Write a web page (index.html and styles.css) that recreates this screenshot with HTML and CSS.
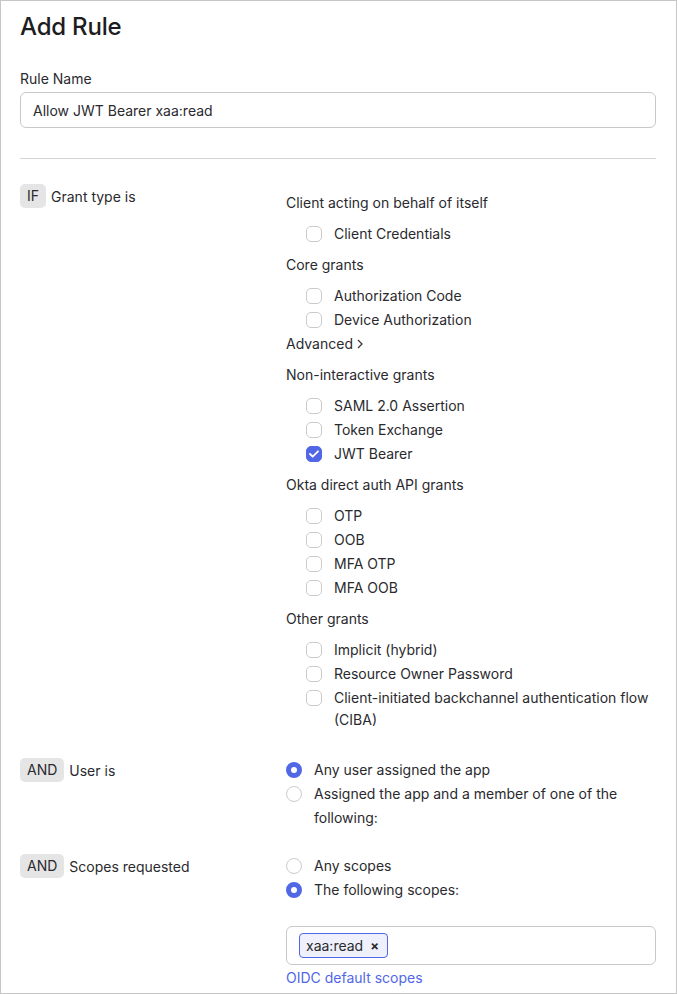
FILE: index.html
```html
<!DOCTYPE html>
<html lang="en">
<head>
    <meta charset="UTF-8">
    <meta name="viewport" content="width=device-width, initial-scale=1.0">
    <title>Add Rule</title>
    <link rel="stylesheet" href="styles.css">
</head>
<body>
    <div class="panel">
        <h1 class="title">Add Rule</h1>

        <label class="field-label" for="rule_name">Rule Name</label>
        <input type="text" id="rule_name" class="text-input" value="Allow JWT Bearer xaa:read">

        <hr class="divider">

        <!-- IF grant type -->
        <div class="condition first">
            <div class="cond-label"><span class="badge">IF</span>Grant type is</div>
            <div class="cond-body grants">
                <div class="group">
                    <div class="group-title">Client acting on behalf of itself</div>
                    <label class="check"><span class="box"></span>Client Credentials</label>
                </div>
                <div class="group">
                    <div class="group-title">Core grants</div>
                    <label class="check"><span class="box"></span>Authorization Code</label>
                    <label class="check"><span class="box"></span>Device Authorization</label>
                    <div class="advanced">Advanced
                        <svg width="8" height="10" viewBox="0 0 8 10"><path d="M2 1l4 4-4 4" fill="none" stroke="#3a3a3e" stroke-width="1.3"/></svg>
                    </div>
                </div>
                <div class="group">
                    <div class="group-title">Non-interactive grants</div>
                    <label class="check"><span class="box"></span>SAML 2.0 Assertion</label>
                    <label class="check"><span class="box"></span>Token Exchange</label>
                    <label class="check"><span class="box checked"><svg width="10" height="8" viewBox="0 0 10 8"><path d="M1 4l2.7 2.7L9 1.3" fill="none" stroke="#fff" stroke-width="1.8" stroke-linecap="round" stroke-linejoin="round"/></svg></span>JWT Bearer</label>
                </div>
                <div class="group">
                    <div class="group-title">Okta direct auth API grants</div>
                    <label class="check"><span class="box"></span>OTP</label>
                    <label class="check"><span class="box"></span>OOB</label>
                    <label class="check"><span class="box"></span>MFA OTP</label>
                    <label class="check"><span class="box"></span>MFA OOB</label>
                </div>
                <div class="group">
                    <div class="group-title">Other grants</div>
                    <label class="check"><span class="box"></span>Implicit (hybrid)</label>
                    <label class="check"><span class="box"></span>Resource Owner Password</label>
                    <label class="check"><span class="box"></span>Client-initiated backchannel authentication flow (CIBA)</label>
                </div>
            </div>
        </div>

        <!-- AND user -->
        <div class="condition">
            <div class="cond-label"><span class="badge">AND</span>User is</div>
            <div class="cond-body">
                <label class="radio"><span class="dot on"></span>Any user assigned the app</label>
                <label class="radio"><span class="dot"></span>Assigned the app and a member of one of the following:</label>
            </div>
        </div>

        <!-- AND scopes -->
        <div class="condition">
            <div class="cond-label"><span class="badge">AND</span>Scopes requested</div>
            <div class="cond-body">
                <label class="radio"><span class="dot"></span>Any scopes</label>
                <label class="radio"><span class="dot on"></span>The following scopes:</label>
                <div class="tag-input">
                    <span class="tag">xaa:read <span class="tag-x">&times;</span></span>
                </div>
                <a class="link" href="#">OIDC default scopes</a>
            </div>
        </div>
    </div>
</body>
</html>
```

FILE: styles.css
```css
/* General */
body {
    margin: 0;
    font-family: 'Inter', 'Noto Sans', sans-serif;
    font-size: 14px;
    color: #2a2a2e;
    background: #fff;
}

.panel {
    box-sizing: border-box;
    width: 677px;
    height: 994px;
    overflow: hidden;
    border: 1px solid #c6c6c6;
    padding: 10px 20px 0 19px;
}

/* Title */
.title {
    margin: 0;
    font-size: 24px;
    line-height: 32px;
    font-weight: 500;
    letter-spacing: -0.2px;
    color: #1d1d21;
}

/* Rule name field */
.field-label {
    display: block;
    margin-top: 26px;
    line-height: 20px;
}

.text-input {
    box-sizing: border-box;
    display: block;
    width: 100%;
    height: 36px;
    margin-top: 3px;
    padding: 0 12px;
    border: 1px solid #c8c8c8;
    border-radius: 6px;
    font-family: inherit;
    font-size: 14px;
    color: #2a2a2e;
    outline: none;
}

.divider {
    margin: 30px 0 25px;
    border: none;
    border-top: 1px solid #d4d4d4;
}

/* Conditions */
.condition {
    display: grid;
    grid-template-columns: 266px 1fr;
    margin-bottom: 24px;
}

.condition.first {
    margin-bottom: 26px;
}

.cond-label {
    display: flex;
    align-items: center;
    gap: 5px;
    height: 24px;
}

.badge {
    height: 24px;
    line-height: 24px;
    padding: 0 7px;
    border-radius: 5px;
    background: #e5e5e5;
}

.cond-body {
    display: flex;
    flex-direction: column;
    align-items: flex-start;
}

.grants {
    padding-top: 7px;
}

.group {
    margin-bottom: 7px;
}

.group:last-child {
    margin-bottom: 0;
}

.group-title {
    line-height: 24px;
    margin-bottom: 7px;
}

/* Checkboxes */
.check {
    display: flex;
    align-items: flex-start;
    gap: 12px;
    padding: 1px 0 1px 20px;
    line-height: 22px;
}

.box {
    box-sizing: border-box;
    flex: none;
    width: 16px;
    height: 16px;
    margin-top: 3px;
    border: 1.5px solid #cbcbcb;
    border-radius: 5px;
    background: #fff;
}

.box.checked {
    display: flex;
    align-items: center;
    justify-content: center;
    border-color: #5167e6;
    background: #5167e6;
}

.advanced {
    display: flex;
    align-items: center;
    gap: 3px;
    line-height: 24px;
}

/* Radios */
.radio {
    display: flex;
    align-items: flex-start;
    gap: 12px;
    line-height: 24px;
    max-width: 370px;
}

.dot {
    box-sizing: border-box;
    flex: none;
    width: 16px;
    height: 16px;
    margin-top: 4px;
    border: 1.5px solid #cbcbcb;
    border-radius: 50%;
    background: #fff;
}

.dot.on {
    border: 5px solid #5167e6;
}

/* Scopes */
.tag-input {
    box-sizing: border-box;
    align-self: stretch;
    height: 39px;
    margin-top: 24px;
    padding: 6px 12px;
    border: 1px solid #c8c8c8;
    border-radius: 6px;
}

.tag {
    box-sizing: border-box;
    display: inline-flex;
    align-items: center;
    gap: 7px;
    height: 25px;
    padding: 0 8px 0 6px;
    border: 1px solid #5167e6;
    border-radius: 4px;
    background: #eef0fc;
}

.tag-x {
    font-weight: 700;
    font-size: 13px;
}

.link {
    margin-top: 3px;
    line-height: 20px;
    color: #5167e6;
    text-decoration: none;
}
```
